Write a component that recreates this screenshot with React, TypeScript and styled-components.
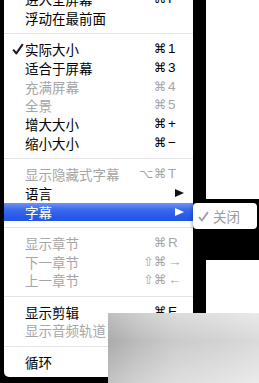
import React from 'react';
import styled, { createGlobalStyle, css } from 'styled-components';

const GlobalStyle = createGlobalStyle`
  html, body {
    margin: 0;
    padding: 0;
    background: #000;
  }
  body {
    font-family: "Noto Sans CJK SC", "Noto Sans", sans-serif;
  }
`;

type Item =
  | { sep: true }
  | {
      sep?: false;
      label: string;
      mods?: string;
      keyName?: string;
      checked?: boolean;
      disabled?: boolean;
      submenu?: boolean;
      active?: boolean;
    };

const items: Item[] = [
  { label: '进入全屏幕', mods: '⌘', keyName: 'F' },
  { label: '浮动在最前面' },
  { sep: true },
  { label: '实际大小', mods: '⌘', keyName: '1', checked: true },
  { label: '适合于屏幕', mods: '⌘', keyName: '3' },
  { label: '充满屏幕', mods: '⌘', keyName: '4', disabled: true },
  { label: '全景', mods: '⌘', keyName: '5', disabled: true },
  { label: '增大大小', mods: '⌘', keyName: '+' },
  { label: '缩小大小', mods: '⌘', keyName: '−' },
  { sep: true },
  { label: '显示隐藏式字幕', mods: '⌥⌘', keyName: 'T', disabled: true },
  { label: '语言', submenu: true },
  { label: '字幕', submenu: true, active: true },
  { sep: true },
  { label: '显示章节', mods: '⌘', keyName: 'R', disabled: true },
  { label: '下一章节', mods: '⇧⌘', keyName: '→', disabled: true },
  { label: '上一章节', mods: '⇧⌘', keyName: '←', disabled: true },
  { sep: true },
  { label: '显示剪辑', mods: '⌘', keyName: 'E' },
  { label: '显示音频轨道', disabled: true },
  { sep: true },
  { label: '循环', mods: '⌘', keyName: 'L' },
];

const Screen = styled.div`
  position: relative;
  display: flex;
  width: 259px;
  height: 383px;
  overflow: hidden;
  background: #000;
`;

const Menu = styled.div`
  align-self: flex-start;
  width: 189px;
  margin-left: 4px;
  margin-top: -10px;
  padding-bottom: 6px;
  background: #fff;
  border-bottom-left-radius: 5px;
  border-bottom-right-radius: 5px;
`;

const Row = styled.div<{ $disabled?: boolean; $active?: boolean }>`
  display: grid;
  grid-template-columns: 21px 1fr auto 14px 12px;
  align-items: center;
  height: 18.75px;
  font-size: 13.5px;
  line-height: 18.75px;
  color: ${({ $disabled }) => ($disabled ? '#a6a6a6' : '#000')};
  ${({ $active }) =>
    $active &&
    css`
      color: #fff;
      background: linear-gradient(#6f93f5 0%, #3d6bec 35%, #2a5be9 70%, #2155e6 100%);
    `}
`;

const CheckCell = styled.span`
  display: flex;
  align-items: center;
  justify-content: flex-end;
  padding-right: 1px;
`;

const Label = styled.span`
  white-space: nowrap;
`;

const Mods = styled.span`
  justify-self: end;
  font-family: "DejaVu Sans", "Liberation Sans", sans-serif;
  font-size: 12.5px;
  letter-spacing: 0.5px;
`;

const KeyName = styled.span`
  font-family: "Liberation Sans", "DejaVu Sans", sans-serif;
  font-size: 13.5px;
  padding-left: 1px;
`;

const Arrow = styled.span<{ $light?: boolean }>`
  justify-self: end;
  margin-right: -3px;
  width: 0;
  height: 0;
  border-top: 4.5px solid transparent;
  border-bottom: 4.5px solid transparent;
  border-left: 9px solid ${({ $light }) => ($light ? '#fff' : '#111')};
`;

const Separator = styled.div`
  height: 12.5px;
  display: flex;
  align-items: center;
  &::after {
    content: '';
    flex: 1;
    height: 1px;
    background: #e4e4e4;
  }
`;

const Backdrop = styled.div`
  flex: 1;
  display: flex;
  flex-direction: column;
  padding-left: 13px;
`;

const Pane = styled.div<{ $h: number; $top?: number }>`
  height: ${({ $h }) => $h}px;
  margin-top: ${({ $top }) => $top || 0}px;
  background: #fff;
`;

const Submenu = styled.div`
  position: absolute;
  left: 193px;
  top: 203px;
  width: 64px;
  height: 26px;
  display: flex;
  align-items: center;
  gap: 4px;
  padding-left: 5px;
  box-sizing: border-box;
  background: #fff;
  border-radius: 4px;
  box-shadow: 0 1px 4px rgba(0, 0, 0, 0.45);
  color: #9c9c9c;
  font-size: 13.5px;
`;

const Haze = styled.div`
  position: absolute;
  left: 108px;
  top: 313px;
  right: 0;
  bottom: 0;
  background:
    linear-gradient(180deg, rgba(255, 255, 255, 0.15) 0%, rgba(0, 0, 0, 0.05) 40%, rgba(255, 255, 255, 0.2) 100%),
    linear-gradient(90deg, #b4b4b4 0%, #c6c6c6 20%, #d6d6d6 45%, #dcdcdc 70%, #e6e6e6 100%);
`;

const Check: React.FC<{ color: string; size?: number }> = ({ color, size = 12 }) => (
  <svg width={size} height={size} viewBox="0 0 12 12">
    <path d="M1.2 6.6 L4.3 10.4 L10.8 1.2" fill="none" stroke={color} strokeWidth="2" strokeLinejoin="round" />
  </svg>
);

export default function App() {
  return (
    <>
      <GlobalStyle />
      <Screen>
        <Menu>
          {items.map((item, i) => {
            if (item.sep) return <Separator key={i} />;
            return (
              <Row key={i} $disabled={item.disabled} $active={item.active}>
                <CheckCell>{item.checked && <Check color="#1a1a1a" />}</CheckCell>
                <Label>{item.label}</Label>
                <Mods>{item.mods}</Mods>
                {item.submenu ? <Arrow $light={item.active} /> : <KeyName>{item.keyName}</KeyName>}
                <span />
              </Row>
            );
          })}
        </Menu>
        <Backdrop>
          <Pane $h={199} />
          <Pane $h={53} $top={61} />
        </Backdrop>
        <Submenu>
          <Check color="#a0a0a0" size={11} />
          <span>关闭</span>
        </Submenu>
        <Haze />
      </Screen>
    </>
  );
}
